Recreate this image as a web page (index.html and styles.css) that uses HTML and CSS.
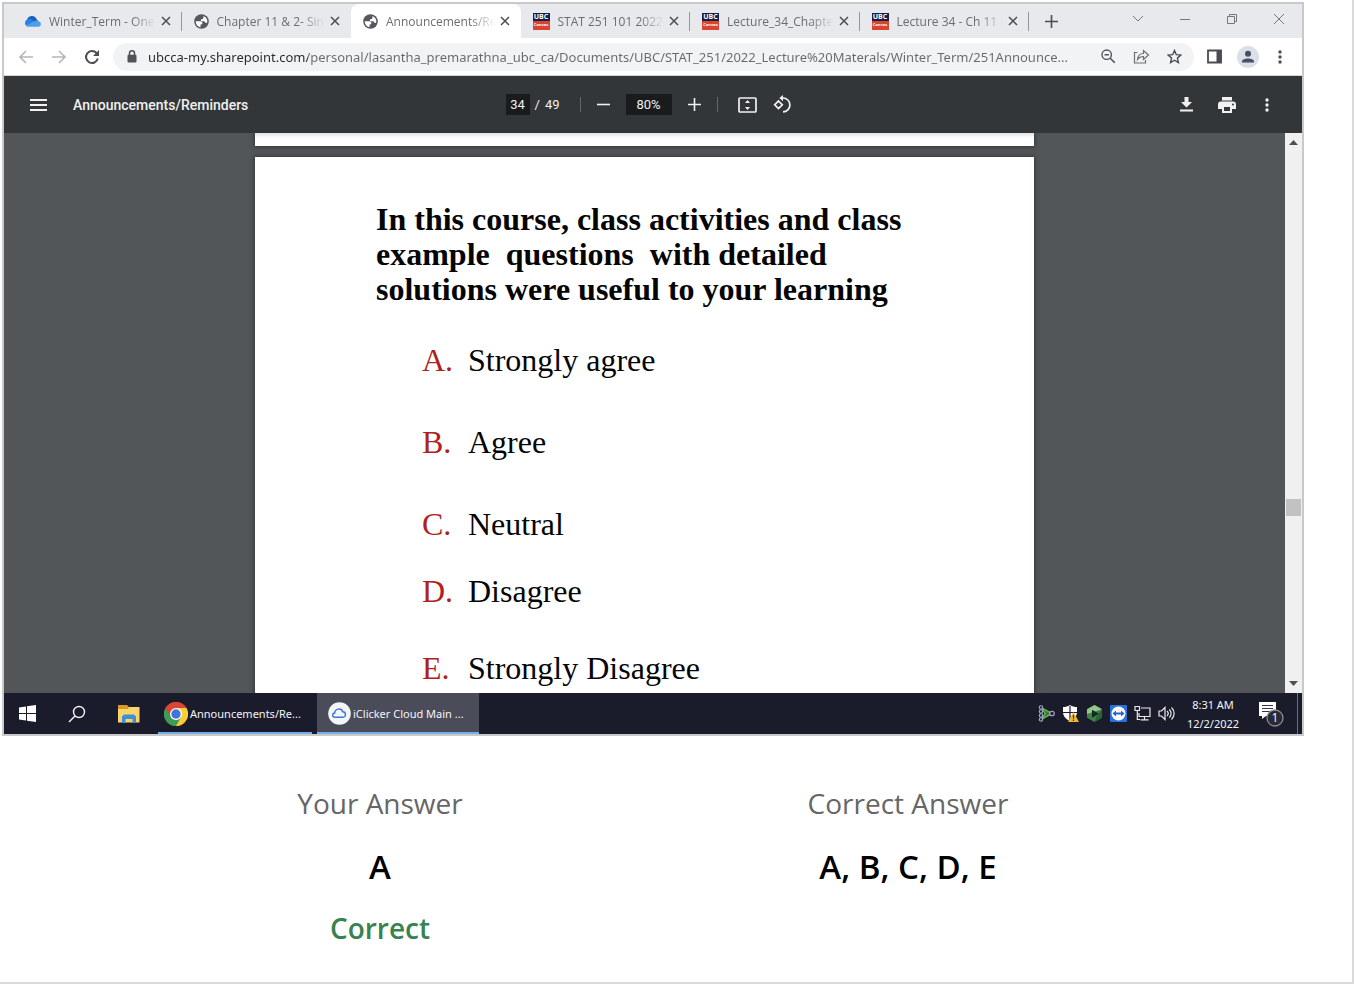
FILE: index.html
```html
<!DOCTYPE html>
<html lang="en">
<head>
<meta charset="utf-8">
<title>Question results</title>
<link rel="stylesheet" href="styles.css">
</head>
<body>
<svg class="defs" aria-hidden="true">
  <symbol id="x" viewBox="0 0 10 10"><path d="M1 1l8 8M9 1l-8 8" stroke="#494c50" stroke-width="1.5" fill="none"/></symbol>
  <symbol id="globe" viewBox="0 0 15 15"><circle cx="7.500" cy="7.500" r="7.300" fill="#55585c"/><path fill="#fff" d="M1.700 7.300h4.600c1.500 0 2.100.8 2.100 1.600 0 1-.8 1.500-1.900 1.500v2.800C3.600 12.700 1.700 10.300 1.700 7.300zM9.300 2c2.600.9 4.200 3.300 4 6-.3 1.100-1.500 1.200-2.100.5-.4-.7-.7-1.200-1.700-1.200H8c-1.500 0-1.700-2 0-2.200 1.200 0 1.900-1 1.300-3.100z"/></symbol>
  <symbol id="dots" viewBox="0 0 4 16"><g fill="currentColor"><circle cx="2" cy="3" r="1.700"/><circle cx="2" cy="8" r="1.700"/><circle cx="2" cy="13" r="1.700"/></g></symbol>
</svg>
<main class="card">
  <section class="screen">
    <header class="tabstrip">
      <div class="tabs">
        <div class="tab">
          <svg width="17" height="12" viewBox="0 0 17 12"><path fill="#1b5fbf" d="M3 5a5 5 0 0 1 9.500-1L14 6l-9 4-3-2z"/><path fill="#2f7fdc" d="M3.500 4.200A4 4 0 0 0 2.500 11L11 6.500 6.500 4a4 4 0 0 0-3 .2z"/><path fill="#4aa0ea" d="M2 10.700 10 6.300c2-1.300 4-.9 5 .2 2.800.6 2.600 5.300-.8 5.300H4c-.8 0-1.500-.4-2-1.100z"/></svg>
          <button class="tab-title">Winter_Term - One</button><button class="close" aria-label="Close tab"><svg width="10" height="10"><use href="#x"/></svg></button>
        </div>
        <div class="tab">
          <svg width="15" height="15"><use href="#globe"/></svg>
          <button class="tab-title">Chapter 11 &amp; 2- Sin</button><button class="close" aria-label="Close tab"><svg width="10" height="10"><use href="#x"/></svg></button>
        </div>
        <div class="tab active">
          <svg width="15" height="15"><use href="#globe"/></svg>
          <button class="tab-title">Announcements/Re</button><button class="close" aria-label="Close tab"><svg width="10" height="10"><use href="#x"/></svg></button>
        </div>
        <div class="tab">
          <span class="ubc"><b>UBC</b><i>Canvas</i></span>
          <button class="tab-title">STAT 251 101 2022</button><button class="close" aria-label="Close tab"><svg width="10" height="10"><use href="#x"/></svg></button>
        </div>
        <div class="tab">
          <span class="ubc"><b>UBC</b><i>Canvas</i></span>
          <button class="tab-title">Lecture_34_Chapte</button><button class="close" aria-label="Close tab"><svg width="10" height="10"><use href="#x"/></svg></button>
        </div>
        <div class="tab">
          <span class="ubc"><b>UBC</b><i>Canvas</i></span>
          <button class="tab-title">Lecture 34 - Ch 11 &amp;</button><button class="close" aria-label="Close tab"><svg width="10" height="10"><use href="#x"/></svg></button>
        </div>
      </div>
      <button class="new-tab" aria-label="New tab"><svg width="13" height="13" viewBox="0 0 13 13"><path d="M6.500 0v13M0 6.500h13" stroke="#494c50" stroke-width="1.600"/></svg></button>
      <div class="window-buttons">
        <button aria-label="Search tabs"><svg width="12" height="12" viewBox="0 0 12 12"><path d="M1 3l5 5 5-5" fill="none" stroke="#777" /></svg></button>
        <button aria-label="Minimize"><svg width="12" height="12" viewBox="0 0 12 12"><path d="M1 6.500h10" stroke="#777"/></svg></button>
        <button aria-label="Restore"><svg width="12" height="12" viewBox="0 0 12 12"><path d="M1.500 3.500h7v7h-7zM3.500 3.500v-2h7v7h-2" fill="none" stroke="#777"/></svg></button>
        <button aria-label="Close window"><svg width="12" height="12" viewBox="0 0 12 12"><path d="M1 1l10 10M11 1L1 11" stroke="#777"/></svg></button>
      </div>
    </header>

    <div class="navbar">
      <div class="nav-buttons">
        <button aria-label="Back"><svg width="16" height="14" viewBox="0 0 16 14"><path d="M15 7H2M8 1L2 7l6 6" fill="none" stroke="#b4b5b8" stroke-width="1.600"/></svg></button>
        <button aria-label="Forward"><svg width="16" height="14" viewBox="0 0 16 14"><path d="M1 7h13M8 1l6 6-6 6" fill="none" stroke="#b4b5b8" stroke-width="1.600"/></svg></button>
        <button aria-label="Reload"><svg width="16" height="16" viewBox="0 0 16 16"><path d="M13.800 9.600A6 6 0 1 1 12.500 4" fill="none" stroke="#4b4e52" stroke-width="2"/><path d="M15 1v6H9z" fill="#4b4e52"/></svg></button>
      </div>
      <div class="address">
        <svg width="10" height="13" viewBox="0 0 10 13"><path d="M2.500 5V3.300a2.500 2.500 0 0 1 5 0V5" fill="none" stroke="#505358" stroke-width="1.500"/><rect x=".5" y="4.800" width="9" height="7.700" rx="1" fill="#505358"/></svg>
        <input class="url" aria-label="Address" value="ubcca-my.sharepoint.com/personal/lasantha_premarathna_ubc_ca/Documents/UBC/STAT_251/2022_Lecture%20Materals/Winter_Term/251Announce...">
        <div class="address-actions">
          <button aria-label="Zoom"><svg width="15" height="15" viewBox="0 0 15 15"><circle cx="5.700" cy="5.700" r="4.700" fill="none" stroke="#505358" stroke-width="1.400"/><path d="M3.500 5.700h4.400M9.200 9.200l4.600 4.600" stroke="#505358" stroke-width="1.600"/></svg></button>
          <button aria-label="Share"><svg width="17" height="15" viewBox="0 0 17 15"><path d="M4.500 3.500H1.500v10.500h11v-3M4.500 10.500c.5-4 2.500-6 6-6V1.500l5 4.500-5 4.500v-3c-3 0-4.500 1-6 3z" fill="none" stroke="#6b6e72" stroke-width="1.200"/></svg></button>
          <button aria-label="Bookmark"><svg width="15" height="15" viewBox="0 0 15 15"><path d="M7.500 1.500l1.800 4.200 4.600.4-3.500 3 1 4.500-3.900-2.400-3.900 2.400 1-4.500-3.500-3 4.600-.4z" fill="none" stroke="#4b4e52" stroke-width="1.400"/></svg></button>
        </div>
      </div>
      <div class="profile">
        <button aria-label="Side panel"><svg width="15" height="15" viewBox="0 0 15 15"><path d="M1 1.500h13v12H1z" fill="none" stroke="#494c50" stroke-width="1.800"/><path d="M9.500 1h5v13h-5z" fill="#494c50"/></svg></button>
        <button aria-label="Profile"><svg width="22" height="22" viewBox="0 0 22 22"><circle cx="11" cy="11" r="11" fill="#dcdfe6"/><circle cx="11" cy="7.800" r="3" fill="#46506a"/><path d="M5 16.500v-1c0-4 12-4 12 0v1z" fill="#46506a"/></svg></button>
        <button class="dark-dots" aria-label="Browser menu"><svg width="4" height="16"><use href="#dots"/></svg></button>
      </div>
    </div>

    <div class="pdfbar">
      <div class="pdf-title">
        <button aria-label="Menu"><svg width="17" height="14" viewBox="0 0 17 14"><path d="M0 2h17M0 7h17M0 12h17" stroke="#f1f1f1" stroke-width="2"/></svg></button>
        <h1>Announcements/Reminders</h1>
      </div>
      <div class="pdf-tools">
        <div class="pages"><input class="box page" aria-label="Page" value="34"><span>/</span><span>49</span></div>
        <i class="rule"></i>
        <button aria-label="Zoom out"><svg width="13" height="13" viewBox="0 0 13 13"><path d="M0 6.500h13" stroke="#f1f1f1" stroke-width="1.600"/></svg></button>
        <input class="box percent" aria-label="Zoom level" value="80%">
        <button aria-label="Zoom in"><svg width="13" height="13" viewBox="0 0 13 13"><path d="M6.500 0v13M0 6.500h13" stroke="#f1f1f1" stroke-width="1.600"/></svg></button>
        <i class="rule"></i>
        <button class="fit" aria-label="Fit to page"><svg width="19" height="16" viewBox="0 0 19 16"><rect x="1" y="1" width="17" height="14" rx="1" fill="none" stroke="#f1f1f1" stroke-width="1.700"/><path d="M9.500 3l2.500 3H7zM9.500 13L7 10h5z" fill="#f1f1f1"/></svg></button>
        <button aria-label="Rotate"><svg width="19" height="19" viewBox="0 0 19 19"><path d="M5.500 6l3.800 3.800-3.800 3.800-3.800-3.800zM10 16.800a6.900 6.900 0 0 0 0-13.800H8.500" fill="none" stroke="#f1f1f1" stroke-width="1.700"/><path d="M10 0v6.200L6.300 3.100z" fill="#f1f1f1"/></svg></button>
      </div>
      <div class="pdf-actions">
        <button aria-label="Download"><svg width="13" height="15" viewBox="0 0 13 15"><path d="M4.500 0h4v5H12l-5.500 5.500L1 5h3.500zM0 12.500h13v2H0z" fill="#f1f1f1"/></svg></button>
        <button aria-label="Print"><svg width="18" height="16" viewBox="0 0 18 16"><path d="M4 0h10v3.500H4zM3 4.500h12a3 3 0 0 1 3 3V12h-4v4H4v-4H0V7.500a3 3 0 0 1 3-3z" fill="#f1f1f1"/><path d="M6 10h6v4H6z" fill="#323639"/><circle cx="15" cy="7.500" r="1" fill="#323639"/></svg></button>
        <button aria-label="More"><svg width="4" height="16"><use href="#dots"/></svg></button>
      </div>
    </div>

    <div class="viewer">
      <div class="pages-column">
        <div class="sheet previous"></div>
        <article class="sheet slide">
          <h2>In this course, class activities and class<br>example&nbsp; questions&nbsp; with detailed<br>solutions were useful to your learning</h2>
          <ol class="options">
            <li><b>A.</b><span>Strongly agree</span></li>
            <li><b>B.</b><span>Agree</span></li>
            <li><b>C.</b><span>Neutral</span></li>
            <li><b>D.</b><span>Disagree</span></li>
            <li><b>E.</b><span>Strongly Disagree</span></li>
          </ol>
        </article>
      </div>
      <div class="scrollbar">
        <svg width="9" height="5" viewBox="0 0 9 5"><path d="M0 5l4.500-5L9 5z" fill="#505050"/></svg>
        <div class="track"><div class="thumb"></div></div>
        <svg width="9" height="5" viewBox="0 0 9 5"><path d="M0 0l4.500 5L9 0z" fill="#505050"/></svg>
      </div>
    </div>

    <footer class="taskbar">
      <div class="launchers">
        <button aria-label="Start"><svg width="17" height="17" viewBox="0 0 17 17"><path d="M0 2.500l7-1v6.500H0zM8 1.300L17 0v8H8zM0 9h7v6.500l-7-1zM8 9h9v8l-9-1.300z" fill="#fff"/></svg></button>
        <button aria-label="Search"><svg width="18" height="18" viewBox="0 0 18 18"><circle cx="11" cy="7" r="5.500" fill="none" stroke="#f3f3f3" stroke-width="1.400"/><path d="M7 11l-6 6" stroke="#f3f3f3" stroke-width="1.400"/></svg></button>
        <button aria-label="File Explorer"><svg width="22" height="18" viewBox="0 0 22 18"><path d="M0 0h9l2 2h10v4H0z" fill="#d9972b"/><path d="M0 4h10l1-2h10.500v15.500H0z" fill="#f9d56b"/><path d="M4 18v-6.500L6 9.500h10l2 2V18h-3.500v-4h-7v4z" fill="#3f8fd4"/></svg></button>
      </div>
      <button class="task"><svg width="24" height="24" viewBox="0 0 24 24"><circle cx="12" cy="12" r="12" fill="#dc4437"/><path d="M1.600 6A12 12 0 0 0 12 24l5.200-9L12 12z" fill="#38a056"/><path d="M12 24A12 12 0 0 0 22.400 6H12l5.200 9z" fill="#fbcd35"/><path d="M1.600 6l5.200 9L12 12l1-6h9.400A12 12 0 0 0 1.600 6z" fill="#dc4437"/><circle cx="12" cy="12" r="6" fill="#fff"/><circle cx="12" cy="12" r="4.700" fill="#3f74dc"/></svg><span>Announcements/Re...</span></button>
      <button class="task current"><svg width="23" height="23" viewBox="0 0 23 23"><circle cx="11.500" cy="11.500" r="11.300" fill="#f4f5f7"/><path d="M7 15.300c-3 0-3-4.200-.3-4.300.3-4.500 6.600-5.400 8-1.200 3.500 0 3.700 5.500.3 5.500z" fill="none" stroke="#3f72d6" stroke-width="1.400"/></svg><span>iClicker Cloud Main ...</span></button>
      <div class="tray">
        <button aria-label="Network graph"><svg width="17" height="17" viewBox="0 0 17 17"><path d="M4 3l10 5.500L4 14l3-5.500z" fill="#3f7a38" stroke="#67c04f" stroke-width="1.300"/><g fill="#20243a" stroke="#a3acc8" stroke-width="1.100"><circle cx="3" cy="2.500" r="1.700"/><circle cx="3" cy="6.500" r="1.700"/><circle cx="3" cy="10.500" r="1.700"/><circle cx="3" cy="14.500" r="1.700"/><circle cx="14" cy="8.500" r="2.300"/></g></svg></button>
        <button aria-label="Security"><svg width="17" height="17" viewBox="0 0 17 17"><path d="M8 0c2 1.500 4.500 2 7 2v5c0 4.500-3 7-7 9-4-2-7-4.500-7-9V2c2.500 0 5-.5 7-2z" fill="#fff"/><path d="M8 1v14M1 7.500h14" stroke="#1a1c2c" stroke-width="1.200"/><path d="M11.500 7l5.500 10H6z" fill="#f0b52c"/><path d="M11.500 10v3.500M11.500 14.500V16" stroke="#3b2c08" stroke-width="1.200"/></svg></button>
        <button aria-label="Recorder"><svg width="17" height="17" viewBox="0 0 17 17"><path d="M8.500 0L16 4.200v8.500L8.500 17 1 12.700V4.200z" fill="#3f8249"/><path d="M8.500 0L16 4.200 1 9V4.200z" fill="#95c58b"/><path d="M16 4.200v8.500L8.500 17l2-5z" fill="#286238"/><path d="M6 4.700l7 4-7 4z" fill="#142c20"/></svg></button>
        <button aria-label="Remote support"><svg width="17" height="17" viewBox="0 0 17 17"><rect width="17" height="17" rx="1" fill="#2a72da"/><circle cx="8.500" cy="8.500" r="7" fill="#fff"/><path d="M2.500 8.500l3.500-3v2h5v-2l3.500 3-3.500 3v-2H6v2z" fill="#2465c7"/></svg></button>
        <button aria-label="Network"><svg width="17" height="17" viewBox="0 0 17 17"><path d="M7 3h9v8.500H5V8M10.500 11.500v3M6.500 14.800h8M1 1.500h4.500v4H1zM3.300 5.500v9H6" fill="none" stroke="#e8e8ec" stroke-width="1.200"/></svg></button>
        <button aria-label="Volume"><svg width="17" height="17" viewBox="0 0 17 17"><path d="M1 6h2.500L7 2.500v12L3.500 11H1zM9 6c1.500 1.500 1.500 3.500 0 5M11.300 4.500c2.400 2.300 2.400 5.700 0 8M13.500 2.500c3.500 3.500 3.500 8.500 0 12" fill="none" stroke="#e8e8ec" stroke-width="1.200"/></svg></button>
      </div>
      <time class="clock"><span>8:31 AM</span><span>12/2/2022</span></time>
      <button class="notice" aria-label="Notifications"><svg width="26" height="26" viewBox="0 0 26 26"><path d="M0 1h17v14H7l-4 3v-3H0z" fill="#fff"/><path d="M3 4.500h11M3 7.500h11M3 10.500h8" stroke="#35384a" stroke-width="1.200"/><circle cx="16" cy="17" r="8" fill="#292b32" stroke="#8c8d92" stroke-width="1.300"/><text x="16" y="21" text-anchor="middle" class="count">1</text></svg></button>
    </footer>
  </section>

  <section class="answers">
    <div class="answer"><h3>Your Answer</h3><p>A</p><strong>Correct</strong></div>
    <div class="answer"><h3>Correct Answer</h3><p>A, B, C, D, E</p></div>
  </section>
</main>
</body>
</html>
```

FILE: styles.css
```css
* { box-sizing: border-box; }
body { margin: 0; background: #fff; font-family: "Open Sans", sans-serif; }
h1, h2, h3, p, ol { margin: 0; padding: 0; }
button { display: flex; align-items: center; justify-content: center; margin: 0; padding: 0; border: 0; background: none; color: inherit; font: inherit; }
input { border: 0; padding: 0; margin: 0; min-width: 0; font: inherit; }
svg { display: block; flex: none; }
.defs { position: absolute; width: 0; height: 0; }
.count { font: 12px "Open Sans", sans-serif; fill: #fff; }

.card { min-height: 100vh; border: solid #dadada; border-width: 0 2px 2px 0; padding: 2px 48px 32px 2px; }
.screen { border: 2px solid #c9c9c9; overflow: hidden; }

.tabstrip { display: flex; height: 34px; background: #e8e9ed; padding: 0 8px; }
.tabs { display: flex; flex: 0 1 1017px; min-width: 0; }
.tab { position: relative; display: flex; flex: 1; align-items: center; gap: 8px; min-width: 0; padding: 0 10px 0 12px; font-size: 12px; color: #6b6d70; }
.tab::after { content: ""; position: absolute; right: 0; top: 8px; width: 1px; height: 19px; background: #96979b; }
.tab:nth-child(2)::after, .tab.active::after { display: none; }
.tab.active { background: #fff; border-radius: 8px 8px 0 0; }
.tab-title { flex: 1; justify-content: flex-start; min-width: 0; margin-right: -6px; overflow: hidden; white-space: nowrap; mask-image: linear-gradient(to right, #000 76%, transparent 98%); }
.close { width: 12px; }
.ubc { display: grid; grid-template-rows: 8px 9px; flex: none; width: 17px; overflow: hidden; background: linear-gradient(#14204a 8px, #d9432f 8px); color: #fff; text-align: center; }
.ubc b { font-size: 7px; line-height: 8px; }
.ubc i { font-size: 4px; line-height: 8px; font-style: normal; font-weight: 700; }
.new-tab { width: 44px; }
.window-buttons { display: flex; gap: 35px; margin-left: auto; padding: 0 9px 4px 0; }

.navbar { display: flex; align-items: center; height: 38px; background: #fff; border-bottom: 1px solid #d3d5d6; }
.nav-buttons { display: flex; align-items: center; gap: 17px; padding: 0 13px 0 14px; }
.address { display: flex; flex: 1; align-items: center; gap: 11px; height: 28px; min-width: 0; padding: 0 12px 0 14px; border-radius: 14px; background: #f2f3f4; }
.address-actions { display: flex; align-items: center; gap: 17px; }
.url { flex: 1; height: 24px; font-family: "Noto Sans", sans-serif; font-size: 13px; color: transparent; background: linear-gradient(to right, #27292c 160px, #67696d 160px); background-clip: text; }
.profile { display: flex; align-items: center; gap: 15px; padding: 0 20px 0 13px; }
.dark-dots { color: #4b4e52; padding-left: 4px; }

.pdfbar { display: grid; grid-template-columns: 1fr auto 1fr; align-items: center; height: 57px; padding: 0 33px 0 26px; background: #323639; color: #f1f1f1; font-family: Roboto, sans-serif; font-size: 13px; }
.pdf-title { display: flex; align-items: center; gap: 26px; }
.pdf-title h1 { font-size: 14px; font-weight: 500; }
.pdf-tools { display: flex; align-items: center; gap: 16px; padding-right: 2px; }
.pages { display: flex; align-items: center; gap: 5px; padding-right: 4px; }
.box { height: 21px; background: #191b1c; color: #f1f1f1; text-align: center; }
.page { width: 24px; }
.percent { width: 46px; }
.rule { width: 1px; height: 15px; background: #63676a; }
.fit { margin-left: 4px; }
.pdf-actions { display: flex; align-items: center; justify-content: flex-end; gap: 25px; }
.pdf-actions button:last-child { padding-left: 4px; }

.viewer { display: flex; height: 560px; background: #525659; }
.pages-column { display: flex; flex: 1; flex-direction: column; align-items: center; gap: 11px; min-width: 0; overflow: hidden; }
.sheet { width: 100%; max-width: 779px; background: #fff; box-shadow: 0 0 4px 1px #34373a; }
.previous { flex: none; height: 13px; background: linear-gradient(#e2e2e2, #fff 5px); }
.slide { flex: 1; padding: 45px 120px 0 121px; font-family: "Liberation Serif", serif; color: #050505; }
.slide h2 { font-size: 32px; line-height: 35px; white-space: nowrap; }
.options { list-style: none; padding: 35px 0 0 46px; font-size: 32px; line-height: 36px; }
.options li { display: grid; grid-template-columns: 46px 1fr; margin-bottom: 46px; }
.options li:nth-child(3) { margin-bottom: 31px; }
.options li:nth-child(4) { margin-bottom: 41px; }
.options b { font-weight: 400; color: #b0211b; }
.scrollbar { display: flex; flex-direction: column; align-items: center; width: 17px; padding: 7px 0; background: #f0f0f0; }
.track { display: grid; grid-template-rows: 354fr 17px 165fr; flex: 1; width: 15px; }
.thumb { grid-row: 2; background: #c2c2c2; }

.taskbar { display: flex; height: 41px; background: #1a1c2c; color: #f5f5f7; font-family: "Noto Sans", sans-serif; font-size: 11px; }
.launchers { display: flex; align-items: center; gap: 32px; padding: 0 18px 0 15px; }
.task { justify-content: flex-start; gap: 2px; width: 154px; margin-right: 5px; padding: 2px 0 0 6px; border-bottom: 2px solid #75aee8; white-space: nowrap; overflow: hidden; }
.task.current { width: 162px; padding-left: 11px; background: #4a4c5a; }
.tray { display: flex; align-items: center; gap: 7px; margin-left: auto; }
.clock { display: flex; flex-direction: column; align-items: center; justify-content: center; width: 76px; line-height: 19px; }
.notice { width: 47px; padding-right: 5px; margin-right: 4px; border-right: 1px solid #6b6d79; }

.answers { display: grid; grid-template-columns: 1fr 1fr; padding: 45px 132px 0 114px; text-align: center; }
.answer h3 { font-size: 28px; line-height: 44px; font-weight: 400; color: #666; }
.answer p { margin: 16px 0; font-size: 33px; line-height: 51px; font-weight: 600; color: #000; }
.answer strong { font-size: 28px; line-height: 40px; font-weight: 600; color: #38824f; }
```
